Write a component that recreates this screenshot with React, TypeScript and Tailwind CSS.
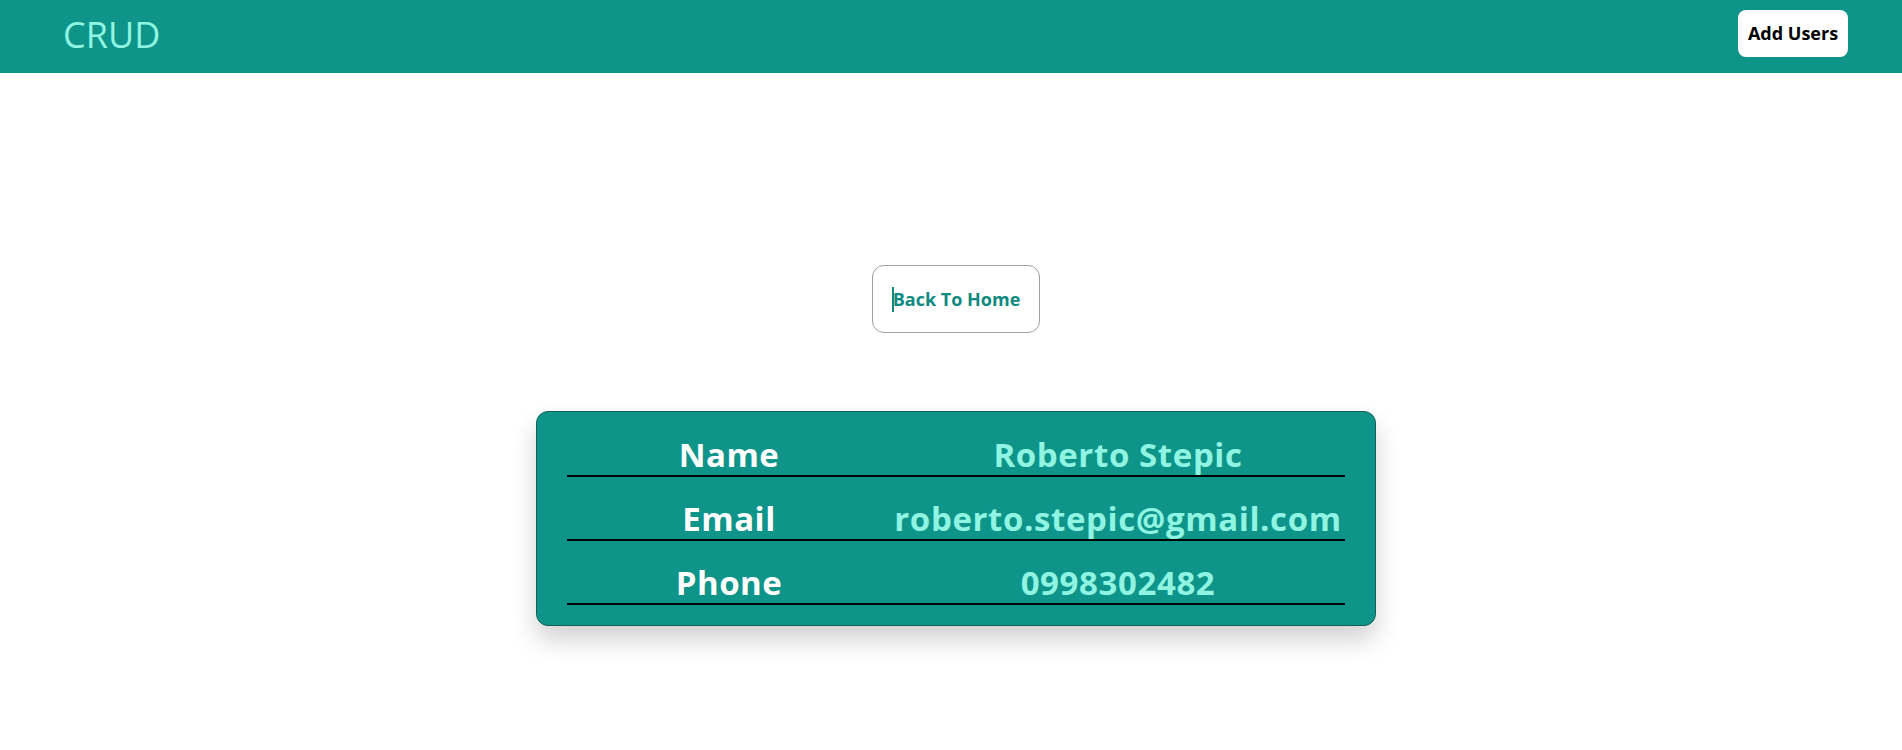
export default function App() {
  const font = { fontFamily: '"Open Sans", "Noto Sans", Arial, sans-serif' };
  const rows = [
    { label: "Name", value: "Roberto Stepic" },
    { label: "Email", value: "roberto.stepic@gmail.com" },
    { label: "Phone", value: "0998302482" },
  ];
  return (
    <div className="min-h-[750px] bg-white" style={font}>
      <header className="flex h-[73px] items-start justify-between bg-[#0e9488] pl-[63px] pr-[54px]">
        <div className="mt-[17px] text-[36px] leading-none text-[#8ff5e2]">CRUD</div>
        <button className="mt-[10px] h-[47px] w-[110px] rounded-[8px] bg-white text-[18px] font-bold text-black">
          Add Users
        </button>
      </header>
      <main className="flex flex-col items-center pl-[10px]">
        <button className="mt-[192px] flex h-[68px] w-[168px] items-center justify-center rounded-[12px] border border-[#a0a0a0] bg-white text-[18px] font-bold text-[#0e8a80]">
          <span className="mr-[-1px] inline-block h-[25px] w-[2px] bg-[#0e8a80]" />
          <span>Back To Home</span>
        </button>
        <div className="mt-[78px] w-[840px] rounded-[12px] border border-[#145f58] bg-[#0e9488] px-[30px] pb-[20px] pt-[1px] shadow-[0_14px_24px_rgba(0,0,0,0.18)]">
          {rows.map((r) => (
            <div key={r.label} className="flex h-[64px] items-end border-b-2 border-black">
              <div className="w-[324px] pb-[4px] text-center text-[33px] font-bold leading-none text-white tracking-[0.5px]">
                {r.label}
              </div>
              <div className="flex-1 pb-[4px] text-center text-[33px] font-bold leading-none text-[#8ff5e2] tracking-[0.6px]">
                {r.value}
              </div>
            </div>
          ))}
        </div>
      </main>
    </div>
  );
}
